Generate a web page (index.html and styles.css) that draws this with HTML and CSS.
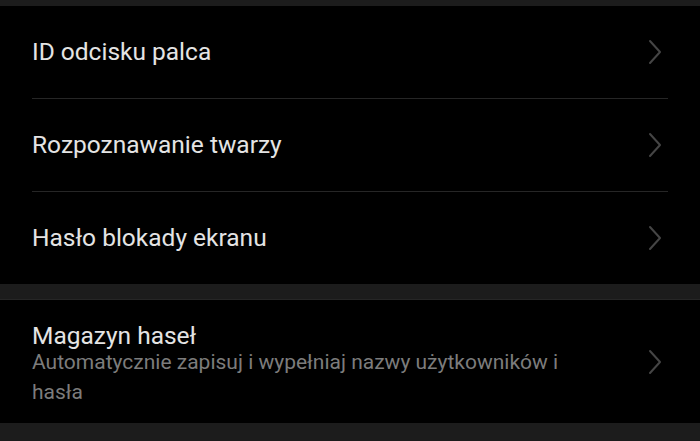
FILE: index.html
```html
<!DOCTYPE html>
<html lang="pl">
<head>
<meta charset="utf-8">
<title>Bezpieczeństwo</title>
<link rel="stylesheet" href="styles.css">
</head>
<body>
  <div class="band band-top"></div>
  <section class="group">
    <div class="row">
      <div class="row-text"><div class="title">ID odcisku palca</div></div>
      <svg class="chev" viewBox="0 0 14 26"><path d="M2 2 L12 13 L2 24"/></svg>
    </div>
    <div class="row">
      <div class="row-text"><div class="title">Rozpoznawanie twarzy</div></div>
      <svg class="chev" viewBox="0 0 14 26"><path d="M2 2 L12 13 L2 24"/></svg>
    </div>
    <div class="row">
      <div class="row-text"><div class="title">Hasło blokady ekranu</div></div>
      <svg class="chev" viewBox="0 0 14 26"><path d="M2 2 L12 13 L2 24"/></svg>
    </div>
  </section>
  <div class="band"></div>
  <section class="group">
    <div class="row row-tall">
      <div class="row-text">
        <div class="title">Magazyn haseł</div>
        <div class="sub">Automatycznie zapisuj i wypełniaj nazwy użytkowników i hasła</div>
      </div>
      <svg class="chev" viewBox="0 0 14 26"><path d="M2 2 L12 13 L2 24"/></svg>
    </div>
  </section>
  <div class="band band-bottom"></div>
</body>
</html>
```
FILE: styles.css
```css
html, body {
  margin: 0;
  padding: 0;
  background: #000;
  height: 100%;
  overflow: hidden;
}
body {
  font-family: Roboto, "Noto Sans", sans-serif;
  color: #e4e4e4;
}
.band {
  height: 15px;
  background: #1c1c1c;
  border-bottom: 1px solid #262626;
}
.band-top { height: 6px; border-bottom: 0; }
.band-bottom { height: 20px; border-bottom: 0; }
.group {
  padding: 0 32px;
}
.row {
  display: flex;
  align-items: center;
  height: 92px;
  border-bottom: 1px solid #262626;
}
.row:last-child { border-bottom: 0; }
.row-text { flex: 1; }
.title {
  font-size: 24.5px;
  line-height: 28px;
}
.row-tall {
  height: 114px;
  padding-top: 9px;
}
.row-tall .title { line-height: 22px; }
.sub {
  font-size: 21px;
  line-height: 30px;
  color: #7c7c7c;
  max-width: 548px;
}
.chev {
  width: 14px;
  height: 26px;
  margin-right: 6px;
  flex: none;
}
.row-tall .chev { margin-top: -9px; }
.chev path {
  fill: none;
  stroke: #454545;
  stroke-width: 2;
  stroke-linecap: round;
  stroke-linejoin: round;
}
```
